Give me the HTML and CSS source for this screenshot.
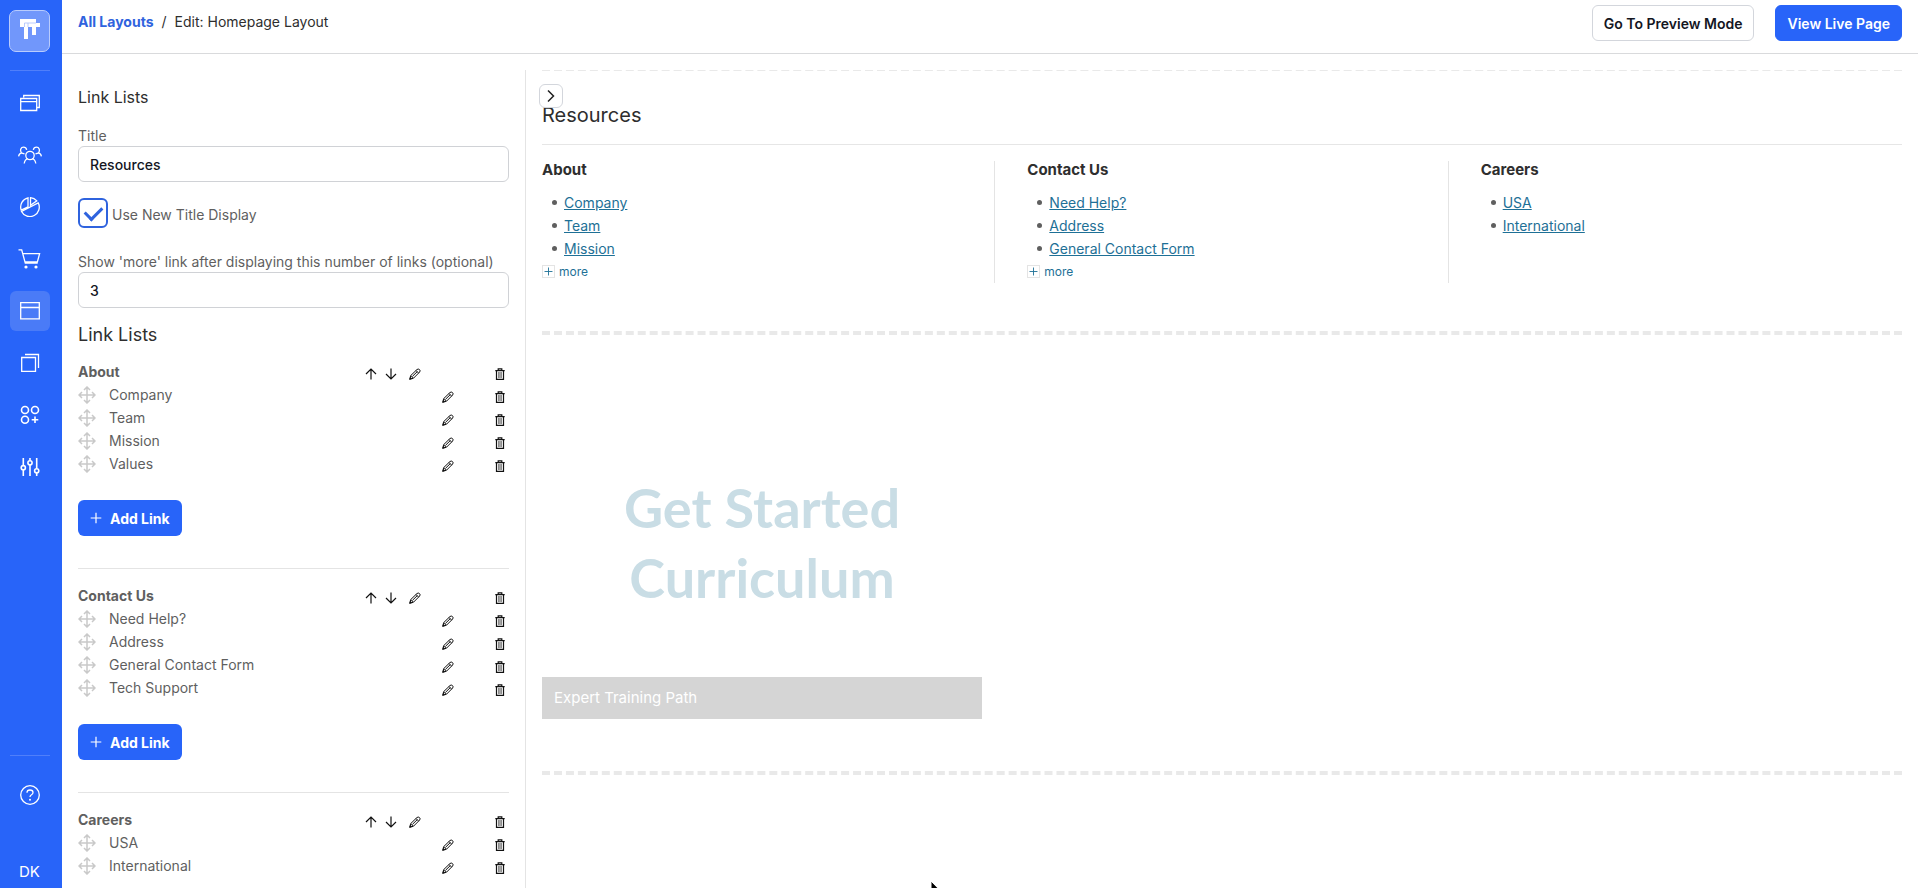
FILE: index.html
```html
<!DOCTYPE html>
<html lang="en">
<head>
<meta charset="utf-8">
<title>Edit: Homepage Layout</title>
<link rel="stylesheet" href="styles.css">
</head>
<body>
<svg class="defs" aria-hidden="true">
  <symbol id="move" viewBox="0 0 18 18"><path d="M9 1v16M1 9h16M6 4l3-3 3 3M6 14l3 3 3-3M4 6L1 9l3 3M14 6l3 3-3 3" fill="none" stroke="currentColor" stroke-width="1.5"/></symbol>
  <symbol id="up" viewBox="0 0 12 12"><path d="M6 11.500V1M1 6l5-5 5 5" fill="none" stroke="currentColor" stroke-width="1.200"/></symbol>
  <symbol id="down" viewBox="0 0 12 12"><path d="M6 .5V11M1 6l5 5 5-5" fill="none" stroke="currentColor" stroke-width="1.200"/></symbol>
  <symbol id="pencil" viewBox="0 0 12 12"><path d="M.7 11.300l1-3.700 6.300-6.100q1.300-1 2.500.1t.1 2.500L4.400 10.300zM7 2.500l2.600 2.600M2 7.700l2.300 2.400M3.500 8.300l4.800-4.700" fill="none" stroke="currentColor" stroke-width="1"/><path d="M.3 11.700l.9-3 2.100 2.100z" fill="currentColor"/></symbol>
  <symbol id="trash" viewBox="0 0 10 12"><path d="M.3 2.600h9.400M3.200 2.400V.8h3.600v1.600M1.500 3v8.400h7V3" fill="none" stroke="currentColor" stroke-width="1.2"/><path d="M3.700 4v6M5 4v6M6.300 4v6" stroke="currentColor" stroke-width=".6"/></symbol>
  <symbol id="plus" viewBox="0 0 12 12"><path d="M6 .7v10.600M.7 6h10.600" stroke="currentColor" stroke-width="1.200"/></symbol>
</svg>
<div class="app">
  <nav class="rail" aria-label="Main">
    <a class="logo" href="#" aria-label="Home"><svg width="20" height="20" viewBox="0 0 20 20"><path d="M0 0h16v4h4v4h-4v8h-4V8H8v12H4V8H0z" fill="#fff"/><path d="M4.500 8V4H16M8 8V4" fill="none" stroke="#a9c0fd" stroke-width=".8"/></svg></a>
    <hr class="rail-line">
    <div class="rail-items">
      <a class="rail-item" href="#" aria-label="Sites"><svg class="ico" viewBox="0 0 20 20"><path d="M3.700 4.500V2.500h15.600v12h-2.600M.7 5.500h16v12H.7zM.7 8.700h16"/></svg></a>
      <a class="rail-item" href="#" aria-label="People"><svg class="ico wide" viewBox="0 0 24 20"><circle cx="12" cy="10.500" r="4.200"/><path d="M6.200 18.500q.8-4.200 3.600-4.800M17.800 18.500q-.8-4.200-3.600-4.800M.6 11.300Q1.200 8 3.600 8.100C1.500 5 3 2.200 5.500 2.200q2.600 0 3.200 2.600M4 8.100l2.500.8M23.400 11.300q-.6-3.300-3-3.200C22.500 5 21 2.200 18.500 2.200q-2.600 0-3.200 2.600M20 8.100l-2.500.8"/></svg></a>
      <a class="rail-item" href="#" aria-label="Reports"><svg class="ico" viewBox="0 0 20 20"><path d="M8 9.800V.9A9.300 9.300 0 0 0 1.200 13zM10.500 8.200V.7a9.300 9.300 0 0 1 6.300 3.200zM1.500 14.500L18.200 5.800A9.300 9.300 0 1 1 1.500 14.500z"/></svg></a>
      <a class="rail-item" href="#" aria-label="Shop"><svg class="ico wide" viewBox="0 0 24 20"><path d="M.5.800h3.200l3.600 13.400h12.400M4.800 4.600h16.800l-2.200 8.200H7"/><circle class="dot" cx="8" cy="18" r="1.600"/><circle class="dot" cx="18" cy="18" r="1.600"/></svg></a>
      <a class="rail-item active" href="#" aria-label="Layouts" aria-current="page"><svg class="ico" viewBox="0 0 20 20"><path d="M.7 1.700h18.600v16.100H.7zM.7 6.500h18.600"/></svg></a>
      <a class="rail-item" href="#" aria-label="Pages"><svg class="ico" viewBox="0 0 20 20"><path d="M1.700 4.500h13.800v13.800H1.700zM5 1.500h13.500V15"/></svg></a>
      <a class="rail-item" href="#" aria-label="Apps"><svg class="ico bold" viewBox="0 0 20 20"><circle cx="5" cy="5" r="3.500"/><circle cx="15" cy="5" r="3.500"/><circle cx="5" cy="14.800" r="3.500"/><path d="M15 11.500v6.600M11.700 14.800h6.600"/></svg></a>
      <a class="rail-item" href="#" aria-label="Settings"><svg class="ico bold" viewBox="0 0 20 20"><path d="M3.300 1v7.500M3.300 13v6M10 1v2.500M10 8v11M16.700 1v10.500M16.700 16v3"/><circle cx="3.300" cy="10.700" r="2.100"/><circle cx="10" cy="5.800" r="2.100"/><circle cx="16.700" cy="13.800" r="2.100"/></svg></a>
    </div>
    <hr class="rail-line">
    <a class="rail-item help" href="#" aria-label="Help"><svg class="ico" viewBox="0 0 20 20"><circle cx="10" cy="10" r="9.300"/><path d="M7 7.800q0-2.800 3-2.800t3 2.600q0 1.400-1.500 2.200T10 12"/><circle class="dot" cx="10" cy="14.800" r="1"/></svg></a>
    <a class="user" href="#">DK</a>
  </nav>
  <div class="main">
    <header class="top">
      <nav class="crumbs" aria-label="Breadcrumb"><a href="#">All Layouts</a><span>/</span><span>Edit: Homepage Layout</span></nav>
      <div class="actions"><button class="btn" type="button">Go To Preview Mode</button><button class="btn primary" type="button">View Live Page</button></div>
    </header>
    <div class="work">
      <form class="panel">
        <h2 class="panel-title">Link Lists</h2>
        <label class="label" for="title">Title</label>
        <input class="field" id="title" type="text" value="Resources">
        <div class="check"><input id="newtitle" type="checkbox" checked><label for="newtitle">Use New Title Display</label></div>
        <label class="label" for="count">Show 'more' link after displaying this number of links (optional)</label>
        <input class="field" id="count" type="text" value="3">
        <h3 class="lists-title">Link Lists</h3>
        <div id="groups"></div>
      </form>
      <main class="preview">
        <button class="toggle" type="button" aria-label="Collapse panel"><svg width="8" height="14" viewBox="0 0 8 14"><path d="M1 1.500L6.500 7 1 12.500" fill="none" stroke="currentColor" stroke-width="1.500"/></svg></button>
        <section class="block resources">
          <h1>Resources</h1>
          <div class="cols" id="cols"></div>
        </section>
        <section class="block">
          <a class="card" href="#"><span class="card-art">Get Started<br>Curriculum</span><span class="card-bar">Expert Training Path</span></a>
        </section>
        <section class="block"></section>
      </main>
    </div>
  </div>
</div>
<svg class="cursor" width="12" height="18" viewBox="0 0 12 18" aria-hidden="true"><path d="M1 1v14l3.200-3 2.300 5 2-1-2.200-4.700H11z" fill="#000" stroke="#fff"/></svg>
<script src="app.js"></script>
</body>
</html>
```
FILE: styles.css
```css
* { box-sizing: border-box; }
body { margin: 0; font: 14px/23px Inter, "Liberation Sans", sans-serif; color: #5f5f5f; background: #fff; overflow: hidden; }
h1, h2, h3, h4, ul { margin: 0; padding: 0; }
button, input { font: inherit; }
button { cursor: pointer; }
.defs { display: none; }
.app { display: flex; height: 100vh; }

.rail { width: 62px; flex: none; display: flex; flex-direction: column; padding: 10px 12px 4px 9px; background: #2864f9; }
.logo { height: 42px; display: grid; place-items: center; padding-bottom: 4px; border: 1px solid #b9ccfd; border-radius: 7px; background: #7197fb; }
.rail-line { width: 40px; height: 1px; margin: 18px auto 12px; border: 0; background: #507ffa; flex: none; }
.rail-items { flex: 1; display: flex; flex-direction: column; align-items: center; gap: 12px; }
.rail-item { width: 40px; height: 40px; display: grid; place-items: center; border-radius: 6px; color: #fff; }
.rail-item.active { background: #4a7bf7; }
.rail-item.help { align-self: center; margin: 7px 0 45px; }
.ico { width: 20px; height: 20px; fill: none; stroke: currentColor; stroke-width: 1.3; }
.ico.wide { width: 24px; }
.ico.bold { stroke-width: 1.6; }
.ico .dot { fill: currentColor; stroke: none; }
.user { color: #fff; text-align: center; text-decoration: none; font-size: 15px; line-height: 24px; }

.main { flex: 1; min-width: 0; display: flex; flex-direction: column; }
.top { display: flex; justify-content: space-between; align-items: flex-start; height: 54px; flex: none; padding: 5px 16px 0; border-bottom: 1px solid #d9dadc; }
.crumbs { display: flex; gap: 8px; padding-top: 5px; color: #2e2e2e; }
.crumbs a { color: #2f63de; font-weight: 700; text-decoration: none; }
.actions { display: flex; gap: 21px; }
.btn { height: 36px; padding: 0 11px; border: 1px solid #d3d6dc; border-radius: 6px; background: #fff; color: #14161f; font-weight: 600; }
.btn.primary { border-color: #2864f9; background: #2864f9; color: #fff; }

.work { flex: 1; min-height: 0; display: flex; padding-top: 16px; }
.panel { width: 464px; flex: none; overflow-y: auto; scrollbar-width: none; padding: 16px 16px 0; border-right: 1px solid #e4e4e4; }
.panel-title { font-size: 16px; font-weight: 400; color: #2e2e2e; }
.label { display: block; margin-top: 16px; line-height: 21px; }
.field { display: block; width: 100%; height: 36px; padding: 0 11px; border: 1px solid #d0d2d6; border-radius: 6px; background: #fff; color: #14161f; font-weight: 500; }
.check { display: flex; align-items: center; gap: 4px; margin: 16px 0 23px; }
.check input { appearance: none; width: 30px; height: 30px; margin: 0; border: 2px solid #2f63de; border-radius: 6px; display: grid; place-items: center; }
.check input:checked::before { content: ""; width: 14px; height: 8px; margin-bottom: 4px; border: solid #2f63de; border-width: 0 0 3px 3px; rotate: -45deg; }
.check + .label { margin-top: 0; }
.check label { padding-top: 3px; }
.lists-title { margin: 15px 0 14px; font-size: 18px; font-weight: 400; color: #2e2e2e; }

.group-head, .row { display: grid; grid-template-columns: 31px 1fr 20px 24px 33px 53px 14px; align-items: center; height: 23px; }
.group-head h4 { grid-column: 1 / 3; font-size: 14px; font-weight: 700; }
.row .edit { grid-column: 6; }
.tool { display: flex; padding: 4px 0 0; border: 0; background: none; color: #111; }
.tool svg { width: 12px; height: 12px; }
.tool .bin { width: 10px; }
.grip { width: 18px; height: 18px; color: #c9c9c9; }
.add { display: flex; align-items: center; gap: 8px; height: 36px; margin: 25px 0 32px; padding: 0 12px; border: 0; border-radius: 6px; background: #2864f9; color: #fff; font-weight: 700; }
.add svg { width: 12px; height: 12px; }
.group + .group { padding-top: 15px; border-top: 1px solid #e4e4e4; }

.preview { position: relative; flex: 1; min-width: 0; overflow: hidden; padding: 0 16px; }
.block { border-top: 4px dashed #e9e9e9; }
.resources { margin-top: -3px; padding: 32px 0 48px; }
.toggle { position: absolute; left: 13px; top: 14px; width: 24px; height: 24px; display: grid; place-items: center; padding: 0; border: 1px solid #d3d6dc; border-radius: 6px; background: #fff; color: #222; }
h1 { padding-bottom: 16px; border-bottom: 1px solid #e6e6e6; font-size: 20px; line-height: 25px; font-weight: 400; color: #2e2e2e; }
.cols { display: grid; grid-template-columns: repeat(3, 1fr); margin-top: 16px; }
.col { min-height: 122px; border-right: 1px solid #e4e4e4; }
.col + .col { padding-left: 32px; }
.col:last-child { border-right: 0; }
.col h4 { margin-bottom: 13px; font-size: 15px; line-height: 17px; font-weight: 700; color: #2e2e2e; }
.col ul { padding-left: 10px; list-style: none; }
.col li { display: flex; align-items: center; gap: 7px; }
.col li::before { content: ""; width: 5px; height: 5px; border-radius: 50%; background: #5f5f5f; }
.col a { color: #1e7096; }
.more { display: flex; align-items: center; gap: 4px; height: 23px; padding: 0; border: 0; background: none; color: #1e7096; font-size: 12px; }
.more svg { width: 13px; height: 13px; padding: 1px; border: 1px solid #e4e4e4; }
.card { display: flex; flex-direction: column; width: 440px; margin-bottom: 52px; text-decoration: none; }
.card-art { padding: 138px 0 64px; text-align: center; font: 700 54px/70px Lato, sans-serif; color: #c9dde5; }
.card-bar { padding: 9px 12px 10px; background: #d5d5d5; color: #fff; font-size: 15px; }
.cursor { position: absolute; left: 930px; top: 880px; }
```
FILE: app.js
```js
const lists = [
  { name: "About", links: ["Company", "Team", "Mission", "Values"] },
  { name: "Contact Us", links: ["Need Help?", "Address", "General Contact Form", "Tech Support"] },
  { name: "Careers", links: ["USA", "International"] }
];
const limit = 3;
const tool = (icon, label, cls = "") =>
  `<button class="tool ${cls}" type="button" aria-label="${label}"><svg class="${icon === "trash" ? "bin" : ""}"><use href="#${icon}"/></svg></button>`;

document.getElementById("groups").innerHTML = lists.map(l => `
  <div class="group">
    <div class="group-head"><h4>${l.name}</h4>${tool("up", "Move up")}${tool("down", "Move down")}${tool("pencil", "Edit")}<span></span>${tool("trash", "Delete")}</div>
    ${l.links.map(t => `<div class="row"><svg class="grip"><use href="#move"/></svg><span>${t}</span>${tool("pencil", "Edit", "edit")}${tool("trash", "Delete")}</div>`).join("")}
    <button class="add" type="button"><svg><use href="#plus"/></svg>Add Link</button>
  </div>`).join("");

document.getElementById("cols").innerHTML = lists.map(l => `
  <div class="col"><h4>${l.name}</h4>
    <ul>${l.links.slice(0, limit).map(t => `<li><a href="#">${t}</a></li>`).join("")}</ul>
    ${l.links.length > limit ? `<button class="more" type="button"><svg><use href="#plus"/></svg>more</button>` : ""}
  </div>`).join("");
```
